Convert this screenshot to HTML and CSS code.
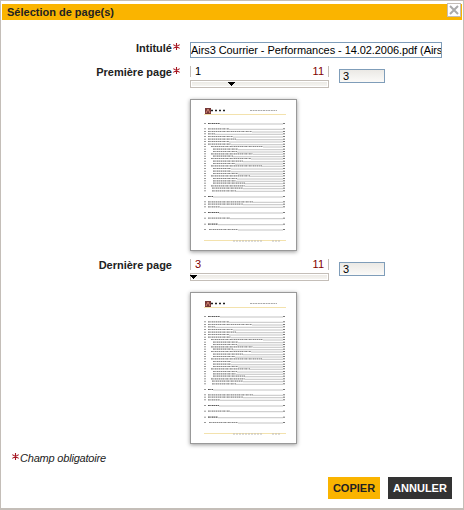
FILE: index.html
```html
<!DOCTYPE html>
<html lang="fr">
<head>
<meta charset="utf-8">
<title>Sélection de page(s)</title>
<link rel="stylesheet" href="styles.css">
</head>
<body>
<form class="dialog">
  <header class="titlebar">
    <span class="title">Sélection de page(s)</span>
    <button class="close" type="button" aria-label="Fermer"><svg width="14" height="14" viewBox="0 0 14 14"><path d="M3 3L11 11M11 3L3 11"/></svg></button>
  </header>
  <main class="fields">
    <div class="row row-title">
      <label class="label">Intitulé<svg class="star" viewBox="0 0 7 7"><use href="#star"/></svg></label>
      <div class="input">Airs3 Courrier - Performances - 14.02.2006.pdf (Airs</div>
    </div>
    <div class="row row-first">
      <label class="label">Première page<svg class="star" viewBox="0 0 7 7"><use href="#star"/></svg></label>
      <div class="slider">
        <div class="bounds"><span>1</span><span class="max">11</span></div>
        <div class="track"><svg class="thumb thumb-first" viewBox="0 0 7 4"><use href="#arrow"/></svg></div>
      </div>
      <div class="number">3</div>
    </div>
    <div class="preview"><svg class="page" viewBox="0 0 105 150"></svg></div>
    <div class="row row-last">
      <label class="label">Dernière page<span class="nostar"></span></label>
      <div class="slider">
        <div class="bounds"><span class="max">3</span><span class="max">11</span></div>
        <div class="track"><svg class="thumb" viewBox="0 0 7 4"><use href="#arrow"/></svg></div>
      </div>
      <div class="number">3</div>
    </div>
    <div class="preview"><svg class="page" viewBox="0 0 105 150"></svg></div>
  </main>
  <p class="note"><svg class="star" viewBox="0 0 7 7"><use href="#star"/></svg><em>Champ obligatoire</em></p>
  <footer class="actions">
    <button class="btn copy" type="button">COPIER</button>
    <button class="btn cancel" type="button">ANNULER</button>
  </footer>
</form>
<svg class="defs">
  <symbol id="star" viewBox="0 0 7 7"><path d="M3.5 0V7M.3 1.6L6.7 5.4M6.7 1.6L.3 5.4" stroke="#a51420" stroke-width="1.1" fill="none"/></symbol>
  <symbol id="arrow" viewBox="0 0 7 4"><path d="M0 0H7V1H6V2H5V3H4V4H3V3H2V2H1V1H0Z"/></symbol>
</svg>
<script src="page.js"></script>
</body>
</html>
```
FILE: styles.css
```css
* { box-sizing: border-box; }
body { margin: 0; font: 11px "Liberation Sans", Arial, sans-serif; color: #000; background: #fff; }
.dialog { width: 464px; height: 510px; border: 1px solid #c4beb8; border-bottom-width: 2px; padding: 3px 0 0 1px; display: flex; flex-direction: column; }
.titlebar { position: relative; height: 16px; margin-right: 1px; background: #fab400; padding-left: 5px; display: flex; align-items: center; flex: none; }
.title { font-weight: bold; color: #222; }
.close { position: absolute; right: 1px; top: -1px; width: 14px; height: 14px; padding: 0; border: 1px solid #c4beb8; background: #fff; }
.close svg { display: block; margin: -1px; }
.close path { stroke: #aaa; stroke-width: 2; }
.fields { padding-top: 22px; }
.row { display: flex; align-items: flex-start; }
.row-title { height: 24px; }
.row-first { height: 33px; }
.row-last { height: 34px; padding-top: 1px; margin-top: 7px; }
.label { width: 178px; margin-right: 10px; display: flex; justify-content: flex-end; align-items: flex-start; font-weight: bold; line-height: 13px; color: #222; }
.star { width: 7px; height: 7px; margin: 1px 0 0 1px; flex: none; }
.nostar { width: 8px; }
.input { width: 252px; height: 16px; border: 1px solid #7f9db9; line-height: 14px; letter-spacing: -.07px; white-space: nowrap; overflow: hidden; }
.slider { width: 139px; margin-right: 10px; }
.bounds { height: 11px; border: solid #c4beb8; border-width: 0 1px; padding: 0 4px; display: flex; justify-content: space-between; line-height: 11px; }
.max { color: #800000; }
.track { height: 8px; margin-top: 3px; border: 1px solid #c4beb8; box-shadow: inset 0 0 0 1px #fff; background: linear-gradient(#e9e7e2, #f8f7f4); }
.thumb { display: block; width: 7px; height: 4px; margin-left: -1px; position: relative; top: 1px; }
.thumb-first { margin-left: 37px; }
.number { width: 46px; height: 14px; margin-top: 3px; border: 1px solid #7f9db9; background: linear-gradient(#ebe9e5, #fbfaf8); padding-left: 3px; line-height: 13px; }
.preview { width: 107px; height: 152px; margin-left: 188px; border: 1px solid #999; box-shadow: 0 1px 4px #999; }
.page { display: block; width: 105px; height: 150px; filter: blur(.35px); }
.note { margin: 8px 0 0 9px; display: flex; line-height: 13px; color: #222; }
.note em { margin-left: 1px; letter-spacing: -.2px; }
.actions { display: flex; gap: 8px; margin-top: 12px; padding-left: 326px; }
.btn { height: 22px; border: 0; padding: 0; font: bold 11px "Liberation Sans", Arial, sans-serif; }
.copy { width: 52px; background: #fab400; color: #222; }
.cancel { width: 64px; background: #333; color: #fff; }
.defs { position: absolute; width: 0; height: 0; }
```
FILE: page.js
```js
// Contents page preview: [baseline, text start, text end, emphasis]
const rows = [
  [24, 17, 29, 1], [29.3, 17, 38, 0], [32, 17, 61, 0], [34.3, 17, 24, 0],
  [37, 17, 42, 0], [39.7, 17, 45, 0], [42, 17, 38, 0], [44.7, 17, 40, 0],
  [47, 20, 72, 0], [49.7, 22, 47, 0], [52, 22, 46, 0], [54.3, 20, 62, 0],
  [56.7, 22, 42, 0], [59, 20, 60, 0], [61.7, 22, 52, 0], [64, 22, 44, 0],
  [66.3, 20, 71, 0], [69, 22, 40, 0], [71.7, 22, 40, 0], [74, 22, 47, 0],
  [76.3, 20, 59, 0], [79, 22, 46, 0], [81.3, 22, 45, 0], [83.7, 22, 54, 0],
  [86.3, 20, 54, 0], [88.7, 21, 52, 0], [91.3, 21, 45, 0], [97, 17, 22, 1],
  [102.3, 17, 62, 0], [104.7, 17, 52, 0], [107.3, 17, 29, 0], [113, 17, 28, 1],
  [118.7, 17, 39, 0], [124.7, 17, 27, 1], [130, 18, 47, 0]
];
let art = '<rect x="14" y="8" width="6" height="6" fill="#753838"/><path d="M15 13L17 9L19 13" stroke="#d58a76" fill="none"/>'
  + '<path d="M20 10.5H35" stroke="#222" stroke-width="1.6" stroke-dasharray="2 2"/>'
  + '<path d="M59 10.5H86" stroke="#aaa" stroke-dasharray="2 .6"/>'
  + '<path d="M13 14.5H95M13 140.5H95" stroke="#f3e2ad"/>'
  + '<path d="M42 141H71M81 141H90" stroke="#bbb" stroke-dasharray="2 1"/>';
for (const [y, start, end, strong] of rows) {
  art += `<path d="M13 ${y - .5}H15" stroke="#999"/>`
    + `<path d="M${start} ${y - .5}H${end}" stroke="${strong ? '#555' : '#888'}" stroke-width="1.2" stroke-dasharray="1.8 .5 1 .5"/>`
    + `<path d="M${end} ${y}H92" stroke="#aaa" stroke-width=".7"/>`
    + `<path d="M92 ${y - .5}H94" stroke="#777"/>`;
}
document.querySelectorAll('.page').forEach(page => { page.innerHTML = art; });
```
